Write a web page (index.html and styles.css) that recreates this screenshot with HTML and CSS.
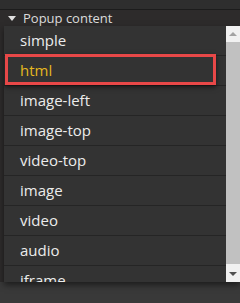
FILE: index.html
```html
<!DOCTYPE html>
<html lang="en">
<head>
    <meta charset="UTF-8">
    <meta name="viewport" content="width=device-width, initial-scale=1.0">
    <title>Popup content</title>
    <link rel="stylesheet" href="styles.css">
</head>
<body>
    <div class="topbar"></div>

    <div class="section-title">
        <span class="caret"></span>
        <span>Popup content</span>
    </div>

    <div class="dropdown">
        <ul class="options">
            <li class="option">simple</li>
            <li class="option active">html</li>
            <li class="option">image-left</li>
            <li class="option">image-top</li>
            <li class="option">video-top</li>
            <li class="option">image</li>
            <li class="option">video</li>
            <li class="option">audio</li>
            <li class="option">iframe</li>
        </ul>
        <div class="scrollbar">
            <span class="arrow up"></span>
            <span class="thumb"></span>
            <span class="arrow down"></span>
        </div>
    </div>

    <div class="footer"></div>
</body>
</html>
```

FILE: styles.css
```css
body { margin: 0; background: #2d2b2b; font-family: "Open Sans", "Noto Sans", sans-serif; color: #e6e6e6; height: 303px; overflow: hidden; }
.topbar { height: 9px; background: #2e2e2e; border-bottom: 1px solid #1c1c1c; }
.section-title { display: flex; align-items: center; gap: 7px; height: 16px; padding-left: 8px; font-size: 13px; color: #dcdcdc; }
.caret { width: 0; height: 0; border-left: 4px solid transparent; border-right: 4px solid transparent; border-top: 5px solid #e0e0e0; }
.dropdown { position: relative; z-index: 1; display: flex; margin-left: 4px; height: 256px; background: #333; box-shadow: 0 3px 6px rgba(0, 0, 0, 0.5); }
.options { flex: 1; margin: 0; padding: 0; list-style: none; overflow: hidden; }
.option { position: relative; height: 29px; line-height: 29px; padding-left: 16px; font-size: 15px; border-bottom: 1px solid #252525; color: #ececec; }
.option.active { color: #e6b820; }
.option.active::after { content: ""; position: absolute; left: 1px; right: 10px; top: -2px; bottom: 0; border: 3px solid #e84848; box-shadow: 0 2px 5px rgba(0, 0, 0, 0.6); }
.scrollbar { width: 14px; display: flex; flex-direction: column; align-items: center; background: #f1f1f1; }
.arrow { width: 0; height: 0; border-left: 4px solid transparent; border-right: 4px solid transparent; margin: 6px 0; }
.arrow.up { border-bottom: 4px solid #a3a3a3; }
.arrow.down { border-top: 4px solid #505050; margin-top: 8px; }
.thumb { width: 14px; flex: 1; background: #c1c1c1; }
.footer { height: 21px; background: #393939; }
```
